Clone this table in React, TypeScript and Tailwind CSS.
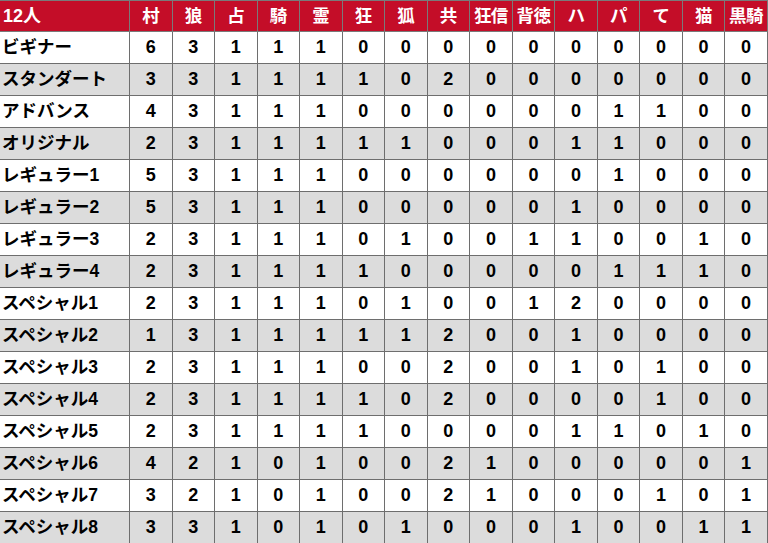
import React from "react";

const headers = ["村", "狼", "占", "騎", "霊", "狂", "狐", "共", "狂信", "背徳", "ハ", "パ", "て", "猫", "黒騎"];

const rows: [string, number[]][] = [
  ["ビギナー", [6, 3, 1, 1, 1, 0, 0, 0, 0, 0, 0, 0, 0, 0, 0]],
  ["スタンダート", [3, 3, 1, 1, 1, 1, 0, 2, 0, 0, 0, 0, 0, 0, 0]],
  ["アドバンス", [4, 3, 1, 1, 1, 0, 0, 0, 0, 0, 0, 1, 1, 0, 0]],
  ["オリジナル", [2, 3, 1, 1, 1, 1, 1, 0, 0, 0, 1, 1, 0, 0, 0]],
  ["レギュラー1", [5, 3, 1, 1, 1, 0, 0, 0, 0, 0, 0, 1, 0, 0, 0]],
  ["レギュラー2", [5, 3, 1, 1, 1, 0, 0, 0, 0, 0, 1, 0, 0, 0, 0]],
  ["レギュラー3", [2, 3, 1, 1, 1, 0, 1, 0, 0, 1, 1, 0, 0, 1, 0]],
  ["レギュラー4", [2, 3, 1, 1, 1, 1, 0, 0, 0, 0, 0, 1, 1, 1, 0]],
  ["スペシャル1", [2, 3, 1, 1, 1, 0, 1, 0, 0, 1, 2, 0, 0, 0, 0]],
  ["スペシャル2", [1, 3, 1, 1, 1, 1, 1, 2, 0, 0, 1, 0, 0, 0, 0]],
  ["スペシャル3", [2, 3, 1, 1, 1, 0, 0, 2, 0, 0, 1, 0, 1, 0, 0]],
  ["スペシャル4", [2, 3, 1, 1, 1, 1, 0, 2, 0, 0, 0, 0, 1, 0, 0]],
  ["スペシャル5", [2, 3, 1, 1, 1, 1, 0, 0, 0, 0, 1, 1, 0, 1, 0]],
  ["スペシャル6", [4, 2, 1, 0, 1, 0, 0, 2, 1, 0, 0, 0, 0, 0, 1]],
  ["スペシャル7", [3, 2, 1, 0, 1, 0, 0, 2, 1, 0, 0, 0, 1, 0, 1]],
  ["スペシャル8", [3, 3, 1, 0, 1, 0, 1, 0, 0, 0, 1, 0, 0, 1, 1]],
];

export default function App() {
  return (
    <div
      className="w-[768px] h-[543px] overflow-hidden bg-white text-black"
      style={{ fontFamily: '"Liberation Sans", "Noto Sans CJK JP", sans-serif' }}
    >
      <div className="grid grid-cols-[130px_repeat(15,42.53px)] auto-rows-[32px]">
        <div className="h-8 flex items-center pl-[3px] bg-[#c40d28] text-white font-bold text-[18px] border-r border-b border-t border-[#7a7a7a]">
          12人
        </div>
        {headers.map((h) => (
          <div
            key={h}
            className="h-8 flex items-center justify-center bg-[#c40d28] text-white font-bold text-[17.5px] tracking-[-0.5px] whitespace-nowrap border-r border-b border-t border-[#7a7a7a]"
          >
            {h}
          </div>
        ))}
        {rows.map(([name, vals], i) => {
          const bg = i % 2 === 1 ? "bg-[#dcdcdc]" : "bg-white";
          return (
            <React.Fragment key={name}>
              <div
                className={`h-8 flex items-center pl-[2px] font-bold text-[17.5px] whitespace-nowrap border-r border-b border-[#6e6e6e] ${bg}`}
              >
                {name}
              </div>
              {vals.map((v, j) => (
                <div
                  key={j}
                  className={`h-8 flex items-center justify-center font-bold text-[18px] border-r border-b border-[#6e6e6e] ${bg}`}
                >
                  {v}
                </div>
              ))}
            </React.Fragment>
          );
        })}
      </div>
    </div>
  );
}
